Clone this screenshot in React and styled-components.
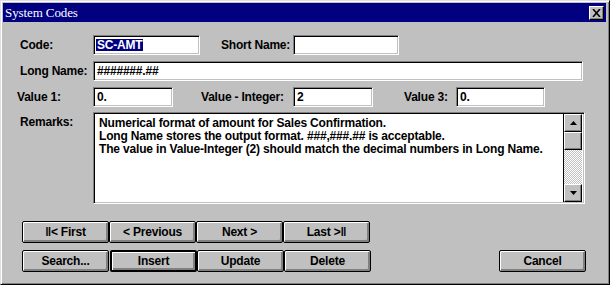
import React from "react";
import styled, { createGlobalStyle } from "styled-components";

const GlobalStyle = createGlobalStyle`
  html, body {
    margin: 0;
    padding: 0;
    background: #c0c0c0;
  }
  body {
    font-family: "Liberation Sans", Arial, sans-serif;
  }
`;

const Window = styled.div`
  box-sizing: border-box;
  width: 610px;
  height: 285px;
  background: #c0c0c0;
  border: 1px solid;
  border-color: #dfdfdf #000 #000 #dfdfdf;
  box-shadow: inset 1px 1px #fff, inset -1px -1px #808080;
  padding: 2px 3px 0 2px;
  display: flex;
  flex-direction: column;
`;

const TitleBar = styled.div`
  height: 19px;
  background: #000080;
  display: flex;
  align-items: center;
  justify-content: space-between;
  padding: 0 2px 0 2px;
`;

const Title = styled.span`
  font-family: "Liberation Serif", "Times New Roman", serif;
  font-size: 13px;
  color: #fff;
  letter-spacing: -0.1px;
`;

const CloseButton = styled.div`
  box-sizing: border-box;
  width: 15px;
  height: 14px;
  background: #c0c0c0;
  border: 1px solid;
  border-color: #fff #000 #000 #fff;
  box-shadow: inset -1px -1px #808080;
  display: flex;
  align-items: center;
  justify-content: center;
`;

const Form = styled.div`
  display: flex;
  flex-direction: column;
  padding: 13px 0 0 17px;
`;

const Row = styled.div`
  display: flex;
  align-items: ${(p) => (p.$top ? "flex-start" : "center")};
  height: ${(p) => p.$h || 20}px;
  margin-bottom: ${(p) => p.$mb ?? 6}px;
`;

const Label = styled.div`
  box-sizing: border-box;
  width: ${(p) => p.$w}px;
  margin-left: ${(p) => p.$ml || 0}px;
  padding-top: ${(p) => p.$pt || 0}px;
  font-size: 12px;
  font-weight: bold;
  letter-spacing: -0.2px;
  color: #000;
  white-space: nowrap;
`;

const Field = styled.div`
  box-sizing: border-box;
  width: ${(p) => p.$w}px;
  height: 20px;
  background: #fff;
  border: 1px solid;
  border-color: #808080 #fff #fff #808080;
  box-shadow: inset 1px 1px #000, inset -1px -1px #c0c0c0;
  padding: 0 3px 0 3px;
  display: flex;
  align-items: center;
  font-size: 12px;
  font-weight: bold;
  letter-spacing: -0.2px;
  color: #000;
  white-space: nowrap;
`;

const Selected = styled.span`
  background: #000080;
  color: #fff;
  line-height: 12px;
  padding: 0 1px 0 1px;
  margin-left: -1px;
`;

const Memo = styled.div`
  box-sizing: border-box;
  width: 492px;
  height: 92px;
  background: #fff;
  border: 1px solid;
  border-color: #808080 #fff #fff #808080;
  box-shadow: inset 1px 1px #000, inset -1px -1px #c0c0c0;
  display: flex;
  padding: 2px;
`;

const MemoText = styled.div`
  flex: 1;
  padding: 2px 0 0 3px;
  font-size: 12px;
  font-weight: bold;
  letter-spacing: -0.17px;
  line-height: 13px;
  color: #000;
  white-space: nowrap;
`;

const ScrollBar = styled.div`
  width: 18px;
  display: flex;
  flex-direction: column;
  border-left: 1px solid #000;
  margin: -1px 0;
`;

const ScrollButton = styled.div`
  box-sizing: border-box;
  height: ${(p) => p.$h || 18}px;
  background: #c0c0c0;
  border: 1px solid;
  border-color: #fff #000 #000 #fff;
  box-shadow: inset -1px -1px #808080;
  display: flex;
  align-items: center;
  justify-content: center;
`;

const Track = styled.div`
  flex: 1;
  background: repeating-conic-gradient(#c0c0c0 0% 25%, #fff 0% 50%) 0 0 / 2px 2px;
`;

const ButtonRow = styled.div`
  display: flex;
  align-items: center;
  padding-left: 2px;
  margin-top: ${(p) => p.$mt}px;
`;

const Button = styled.div`
  box-sizing: border-box;
  width: 87px;
  height: 22px;
  margin-left: ${(p) => p.$ml || 0}px;
  background: #c0c0c0;
  border: ${(p) => (p.$default ? 2 : 1)}px solid #000;
  border-radius: 2px;
  box-shadow: inset 1px 1px #fff, inset -1px -1px #808080, inset -2px -2px #808080;
  display: flex;
  align-items: center;
  justify-content: center;
  font-size: 12px;
  font-weight: bold;
  letter-spacing: -0.2px;
  color: #000;
  white-space: nowrap;
`;

const Arrow = ({ up }) => (
  <svg width="7" height="4" viewBox="0 0 7 4">
    <polygon points={up ? "3.5,0 7,4 0,4" : "0,0 7,0 3.5,4"} fill="#000" />
  </svg>
);

export default function App() {
  return (
    <>
      <GlobalStyle />
      <Window>
        <TitleBar>
          <Title>System Codes</Title>
          <CloseButton>
            <svg width="9" height="8" viewBox="0 0 9 8">
              <path d="M1 0 L8 8 M8 0 L1 8" stroke="#000" strokeWidth="1.6" />
            </svg>
          </CloseButton>
        </TitleBar>
        <Form>
          <Row>
            <Label $w={73}>Code:</Label>
            <Field $w={107}>
              <Selected>SC-AMT</Selected>
            </Field>
            <Label $w={72} $ml={21}>Short Name:</Label>
            <Field $w={106}></Field>
          </Row>
          <Row>
            <Label $w={73}>Long Name:</Label>
            <Field $w={490}>#######.##</Field>
          </Row>
          <Row $mb={5}>
            <Label $w={76} $ml={-3}>Value 1:</Label>
            <Field $w={80}>0.</Field>
            <Label $w={92} $ml={28}>Value - Integer:</Label>
            <Field $w={80}>2</Field>
            <Label $w={52} $ml={31}>Value 3:</Label>
            <Field $w={89}>0.</Field>
          </Row>
          <Row $top $h={92} $mb={0}>
            <Label $w={73} $pt={3}>Remarks:</Label>
            <Memo>
              <MemoText>
                Numerical format of amount for Sales Confirmation.
                <br />
                Long Name stores the output format. ###,###.## is acceptable.
                <br />
                The value in Value-Integer (2) should match the decimal numbers in Long Name.
              </MemoText>
              <ScrollBar>
                <ScrollButton>
                  <Arrow up />
                </ScrollButton>
                <ScrollButton />
                <Track />
                <ScrollButton>
                  <Arrow />
                </ScrollButton>
              </ScrollBar>
            </Memo>
          </Row>
          <ButtonRow $mt={17}>
            <Button>ǁ&lt; First</Button>
            <Button>&lt; Previous</Button>
            <Button>Next &gt;</Button>
            <Button>Last &gt;ǁ</Button>
          </ButtonRow>
          <ButtonRow $mt={7}>
            <Button>Search...</Button>
            <Button $default $ml={1}>Insert</Button>
            <Button>Update</Button>
            <Button>Delete</Button>
            <Button $ml={128}>Cancel</Button>
          </ButtonRow>
        </Form>
      </Window>
    </>
  );
}
